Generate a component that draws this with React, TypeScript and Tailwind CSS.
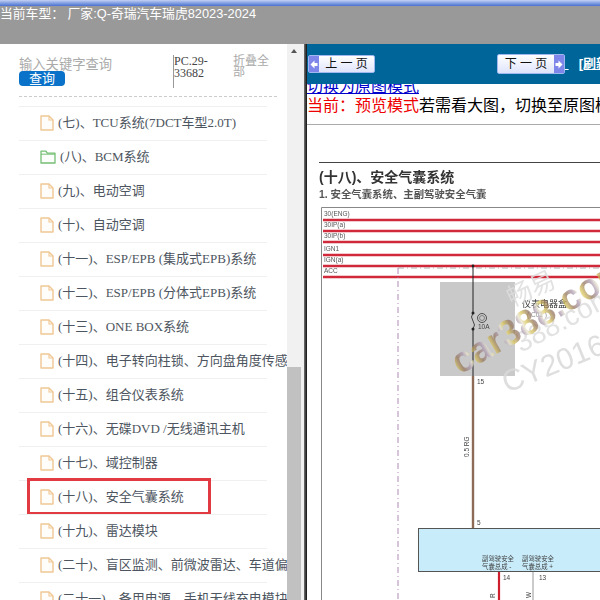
const cjk = "font-['Liberation_Serif','Noto_Sans_CJK_SC',serif]";
const sansFont = "'Liberation Sans','Noto Sans CJK SC',sans-serif";

const items = [
  "(七)、TCU系统(7DCT车型2.0T)",
  "(八)、BCM系统",
  "(九)、电动空调",
  "(十)、自动空调",
  "(十一)、ESP/EPB (集成式EPB)系统",
  "(十二)、ESP/EPB (分体式EPB)系统",
  "(十三)、ONE BOX系统",
  "(十四)、电子转向柱锁、方向盘角度传感器",
  "(十五)、组合仪表系统",
  "(十六)、无碟DVD /无线通讯主机",
  "(十七)、域控制器",
  "(十八)、安全气囊系统",
  "(十九)、雷达模块",
  "(二十)、盲区监测、前微波雷达、车道偏离",
  "(二十一)、备用电源、手机无线充电模块",
];

function FileIcon({ open }: { open?: boolean }) {
  if (open) {
    return (
      <svg width="16" height="14" viewBox="0 0 16 14" className="shrink-0">
        <path d="M1 13V1.2h5l1.2 2H15V13z" fill="#fbfefb" stroke="#74bf74" strokeWidth="1.3" strokeLinejoin="round" />
        <path d="M1 4.2h14" stroke="#74bf74" strokeWidth="1" />
      </svg>
    );
  }
  return (
    <svg width="14" height="16" viewBox="0 0 14 16" className="shrink-0">
      <path d="M1 1h8l4 4v10H1z" fill="#fffdf9" stroke="#f0c794" strokeWidth="1.4" strokeLinejoin="round" />
      <path d="M9 1v4h4" fill="none" stroke="#f0c794" strokeWidth="1.1" />
    </svg>
  );
}

function Arrow({ dir }: { dir: "left" | "right" }) {
  return (
    <span className="w-[10px] h-full shrink-0 bg-[#7f86ea] flex items-center justify-center">
      <svg width="8" height="9" viewBox="0 0 8 9">
        <path d={dir === "left" ? "M0.5 4.5L4.5 0.5V3H7.5V6H4.5V8.5z" : "M7.5 4.5L3.5 0.5V3H0.5V6H3.5V8.5z"} fill="#ffffff" />
      </svg>
    </span>
  );
}

function Wiring() {
  const rails = [
    { label: "30(ENG)", y: 95 },
    { label: "30IP(a)", y: 106 },
    { label: "30IP(b)", y: 117 },
    { label: "IGN1", y: 130 },
    { label: "IGN(a)", y: 141 },
    { label: "ACC", y: 152 },
  ];
  return (
    <svg width="293" height="475" viewBox="0 0 293 475" className="block blur-[0.3px]">
      <defs>
        <linearGradient id="wm" gradientUnits="userSpaceOnUse" x1="0" y1="0" x2="21" y2="0" spreadMethod="repeat">
          <stop offset="0" stopColor="#dcc95c" />
          <stop offset="0.3" stopColor="#94755a" />
          <stop offset="0.6" stopColor="#ab98b0" />
          <stop offset="0.8" stopColor="#e8e4d0" />
          <stop offset="1" stopColor="#dcc95c" />
        </linearGradient>
      </defs>
      <line x1="12" y1="37.5" x2="293" y2="37.5" stroke="#444" strokeWidth="1" />
      <text x="12" y="57" fontSize="14" fontWeight="600" fill="#333" fontFamily={sansFont}>(十八)、安全气囊系统</text>
      <text x="12" y="73" fontSize="10.4" fontWeight="700" fill="#555" fontFamily={sansFont}>1.  安全气囊系统、主副驾驶安全气囊</text>
      <path d="M14.5 475V82.5H293" fill="none" stroke="#888" />
      {rails.map((r) => (
        <g key={r.label}>
          <text x="17" y={r.y - 4} fontSize="6.5" fill="#555" fontFamily={sansFont}>{r.label}</text>
          <line x1="16" y1={r.y} x2="293" y2={r.y} stroke="#d0293a" strokeWidth="2.4" />
        </g>
      ))}
      <line x1="91" y1="143" x2="293" y2="143" stroke="#999" strokeWidth="0.8" strokeDasharray="6 3 1 3" />
      <line x1="91" y1="143" x2="91" y2="475" stroke="#a77db0" strokeWidth="0.9" strokeDasharray="6 3 1 3" />
      <rect x="133" y="157" width="75" height="94" fill="#c9c9c9" />
      <line x1="166" y1="141" x2="166" y2="188" stroke="#222" strokeWidth="1" />
      <line x1="166" y1="204" x2="166" y2="251" stroke="#222" strokeWidth="1" />
      <path d="M166 188q-3 4 0 8t0 8" fill="none" stroke="#222" strokeWidth="0.8" />
      <circle cx="166" cy="141" r="1.4" fill="#222" />
      <circle cx="166" cy="188" r="1.5" fill="#222" />
      <circle cx="166" cy="204" r="1.5" fill="#222" />
      <circle cx="175" cy="193" r="4.5" fill="none" stroke="#333" strokeWidth="0.8" />
      <circle cx="175" cy="193" r="2.5" fill="none" stroke="#555" strokeWidth="0.6" />
      <text x="171" y="204" fontSize="6.5" fill="#444" fontFamily={sansFont}>10A</text>
      <text x="215" y="182" fontSize="9" fill="#333" fontFamily={sansFont}>仪表电器盒</text>
      <text x="220" y="192" fontSize="6.5" fill="#888" fontFamily={sansFont}>( C01 )</text>
      <line x1="166" y1="251" x2="166" y2="403" stroke="#8d6a55" strokeWidth="2.4" />
      <text x="170" y="259" fontSize="6.5" fill="#444" fontFamily={sansFont}>15</text>
      <text x="170" y="400" fontSize="6.5" fill="#444" fontFamily={sansFont}>5</text>
      <text transform="translate(162 332) rotate(-90)" fontSize="6.5" fill="#444" fontFamily={sansFont}>0.5 RG</text>
      <rect x="111.5" y="403.5" width="190" height="43" fill="#c8ecfa" stroke="#555" />
      <text x="175" y="436" fontSize="6.4" fill="#444" fontFamily={sansFont}>副驾驶安全</text>
      <text x="175" y="444" fontSize="6.4" fill="#444" fontFamily={sansFont}>气囊总成 -</text>
      <text x="215" y="436" fontSize="6.4" fill="#444" fontFamily={sansFont}>副驾驶安全</text>
      <text x="215" y="444" fontSize="6.4" fill="#444" fontFamily={sansFont}>气囊总成 +</text>
      <line x1="192" y1="447" x2="192" y2="475" stroke="#cf1f2e" strokeWidth="2.2" />
      <line x1="226" y1="447" x2="226" y2="475" stroke="#b5b5b5" strokeWidth="1.4" />
      <text x="196" y="455" fontSize="6.5" fill="#444" fontFamily={sansFont}>14</text>
      <text x="232" y="455" fontSize="6.5" fill="#444" fontFamily={sansFont}>13</text>
      <text transform="translate(188 473) rotate(-90)" fontSize="6.5" fill="#444" fontFamily={sansFont}>R</text>
      <text transform="translate(224 473) rotate(-90)" fontSize="6.5" fill="#444" fontFamily={sansFont}>W</text>
      <g fontFamily={sansFont}>
        <text transform="translate(205 182) rotate(-25)" fontSize="25" fill="#dddddd" fillOpacity="0.85">畅易</text>
        <text transform="translate(214 228) rotate(-28)" fontSize="28" fill="#dddddd" fillOpacity="0.85">388.com</text>
        <text transform="translate(200 268) rotate(-22)" fontSize="30" fill="#d8d8d8" fillOpacity="0.85">CY2016</text>
        <text transform="translate(153 250) rotate(-30)" fontSize="36" fontWeight="700" fill="url(#wm)" fillOpacity="0.75">car388.com</text>
      </g>
    </svg>
  );
}

export default function App() {
  return (
    <div className="w-[600px] h-[600px] overflow-hidden bg-white flex flex-col font-['Liberation_Sans','Noto_Sans_CJK_SC',sans-serif]">
      <div className="h-[6px] shrink-0 bg-gradient-to-b from-[#c3d0f2] to-[#4a70d0]" />
      <div className="h-[38px] shrink-0 bg-[#999999] text-[12.8px] leading-[15px] text-white whitespace-pre">
        当前车型： 厂家:Q-奇瑞汽车瑞虎82023-2024
      </div>
      <div className="flex flex-1 min-h-0">
        <aside className="w-[304px] shrink-0 flex">
          <div className="w-[287px] shrink-0 overflow-hidden">
            <div className="ml-[19px] w-[258px] h-[53px] border-b border-dashed border-[#cccccc] flex">
              <div className="w-[154px] pt-[14px]">
                <div className="text-[13.3px] leading-[13px] text-[#aaaaaa] whitespace-nowrap">输入关键字查询</div>
                <div className="w-[46px] h-[15px] rounded-[4px] bg-[#0a72c8] text-white text-[13px] leading-[15px] text-center">查询</div>
              </div>
              <div className={`w-[60px] h-[33px] mt-[11px] border-l border-[#999999] text-[12px] leading-[12px] text-[#444444] ${cjk}`}>PC.29-<br />33682</div>
              <div className="w-[38px] pt-[12px] text-[12px] leading-[11px] text-[#aaaaaa]">折叠全部</div>
            </div>
            <ul className="ml-[19px] w-[248px] mt-[9px]">
              {items.map((t, i) => (
                <li key={t} className="relative h-[34px] border-t border-[#f0f0f0] pl-[21px] pb-[2px] flex items-center gap-[4px] whitespace-nowrap">
                  <FileIcon open={i === 1} />
                  <span className={`text-[13px] text-[#4d5560] ${cjk}`}>{t}</span>
                  {i === 11 && (
                    <div className="absolute left-[8px] -top-[3px] w-[184px] h-[37px] border-[3px] border-[#e23a42]" />
                  )}
                </li>
              ))}
            </ul>
          </div>
          <div className="w-[14px] shrink-0 bg-[#f1f1f1] flex flex-col">
            <div className="h-[13px] flex items-center justify-center">
              <div className="w-0 h-0 border-x-[3.5px] border-x-transparent border-b-[4px] border-b-[#555555]" />
            </div>
            <div className="flex-1" />
            <div className="h-[233px] bg-[#c1c1c1]" />
          </div>
          <div className="w-[3px] shrink-0 bg-[#f0f0f0]" />
        </aside>
        <div className="w-[3px] shrink-0 bg-gradient-to-r from-[#777777] to-[#111111]" />
        <main className="flex-1 min-w-0 overflow-hidden">
          <div className="h-[40px] bg-[#006699] flex items-center pl-[1px] whitespace-nowrap">
            <div className="w-[67px] h-[18px] shrink-0 border border-[#9fb8f0] rounded-[2px] bg-gradient-to-b from-[#ffffff] to-[#dfe4fb] flex items-center text-[12px] text-[#111111]">
              <Arrow dir="left" />
              <span className="flex-1 text-center">上 一 页</span>
            </div>
            <div className="ml-[122px] w-[68px] h-[20px] shrink-0 border border-[#9fb8f0] rounded-[2px] bg-gradient-to-b from-[#ffffff] to-[#dfe4fb] flex items-center text-[12px] text-[#111111]">
              <span className="flex-1 text-center">下 一 页</span>
              <Arrow dir="right" />
            </div>
            <span className="text-[13px] text-white underline shrink-0">&nbsp;</span>
            <span className="ml-[10px] text-[13px] font-bold text-white underline shrink-0">[刷新]</span>
          </div>
          <div className="h-[12px] overflow-hidden flex items-end text-[16px] text-[#0000cc] underline whitespace-nowrap">
            <span className="leading-[18px]">切换为原图模式</span>
          </div>
          <div className="h-[29px] border-b border-[#aaaaaa] text-[16px] leading-[20px] text-black whitespace-nowrap">
            <span className="text-[#ee0000]">当前：预览模式</span>若需看大图，切换至原图模式
          </div>
          <Wiring />
        </main>
      </div>
    </div>
  );
}
